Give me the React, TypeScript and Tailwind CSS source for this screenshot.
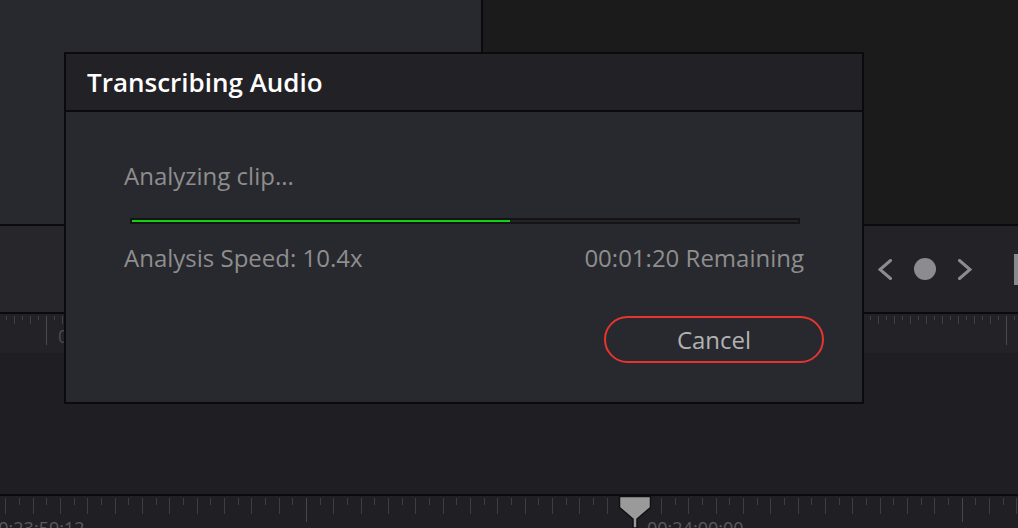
import React from 'react';

const topTicks = Array.from({ length: 130 }, (_, n) => {
    const i = n - 6;
    const x = Math.round(46 + i * 8);
    const kind = i % 120 === 0 ? 'major' : Math.abs(i % 2) === 0 ? 'long' : 'short';
    return { x, kind };
});

const bottomTicks = Array.from({ length: 76 }, (_, n) => {
    const i = n - 22;
    const x = Math.round(306 + i * 13.66);
    const kind = i % 24 === 0 ? 'major' : Math.abs(i % 2) === 0 ? 'long' : 'short';
    return { x, kind };
});

const TopRuler: React.FC = () => (
    <svg width="1018" height="39" className="absolute inset-0" shapeRendering="crispEdges">
        {topTicks.map((t, idx) => (
            <rect
                key={idx}
                x={t.x}
                y={2}
                width={1}
                height={t.kind === 'major' ? 29 : t.kind === 'long' ? 8 : 4}
                fill={t.kind === 'major' ? '#4a4a4f' : '#404045'}
            />
        ))}
    </svg>
);

const BottomRuler: React.FC = () => (
    <svg width="1018" height="32" className="absolute inset-0" shapeRendering="crispEdges">
        {bottomTicks.map((t, idx) => (
            <rect
                key={idx}
                x={t.x}
                y={2}
                width={1}
                height={t.kind === 'major' ? 24 : t.kind === 'long' ? 16 : 7}
                fill={t.kind === 'major' ? '#47474c' : '#3d3d42'}
            />
        ))}
    </svg>
);

const Playhead: React.FC = () => (
    <svg width="34" height="32" viewBox="0 0 34 32" className="absolute left-[618px] top-0">
        <path
            d="M1.5 0.5 H32.5 V11.5 L19 23 V32 H15 V23 L1.5 11.5 Z"
            fill="#9a9a9a"
            stroke="#111113"
            strokeWidth="1.5"
            strokeLinejoin="round"
        />
    </svg>
);

const Chevron: React.FC<{ dir: 'left' | 'right' }> = ({ dir }) => (
    <svg width="14" height="21" viewBox="0 0 14 21">
        <path
            d={dir === 'left' ? 'M12.5 1.5 L2 10.5 L12.5 19.5' : 'M1.5 1.5 L12 10.5 L1.5 19.5'}
            fill="none"
            stroke="#8c8c8e"
            strokeWidth="3"
            strokeLinecap="round"
        />
    </svg>
);

const App: React.FC = () => {
    const progress = 378;

    return (
        <div className="relative w-[1018px] h-[528px] overflow-hidden bg-[#1f1f23] flex flex-col font-['Open_Sans','Noto_Sans',sans-serif]">
            {/* viewers */}
            <div className="flex h-[224px]">
                <div className="w-[481px] bg-[#28292e]" />
                <div className="w-[2px] bg-[#0b0b0d]" />
                <div className="flex-1 bg-[#1b1b1b]" />
            </div>
            <div className="h-[2px] bg-[#0b0b0d]" />

            {/* transport bar */}
            <div className="flex h-[86px] bg-[#222227]">
                <div className="w-[481px] bg-[#26262b]" />
                <div className="flex-1 flex items-center justify-end gap-[22px]">
                    <Chevron dir="left" />
                    <div className="w-[22px] h-[22px] rounded-full bg-[#8c8c8e]" />
                    <Chevron dir="right" />
                    <div className="ml-[20px] w-[4px] h-[31px] bg-[#8a8a8c]" />
                </div>
            </div>
            <div className="h-[2px] bg-[#0b0b0d]" />

            {/* timeline ruler */}
            <div className="relative h-[39px] bg-[#232327]">
                <TopRuler />
                <div className="relative pl-[58px] pt-[13px] text-[18px] leading-[18px] text-[#4c4c50]">
                    00:00:00:00
                </div>
            </div>
            <div className="flex-1 bg-[#1f1f23]" />
            <div className="h-[2px] bg-[#0b0b0d]" />

            {/* mini timeline */}
            <div className="relative h-[32px] bg-[#202024]">
                <BottomRuler />
                <div className="relative flex pt-[23px] text-[18px] leading-[18px] text-[#5a5a5e] whitespace-nowrap">
                    <span className="-ml-[12px] w-[659px]">00:23:59:12</span>
                    <span>00:24:00:00</span>
                </div>
                <Playhead />
            </div>

            {/* dialog */}
            <div className="absolute left-[64px] top-[52px] w-[800px] h-[352px] border-2 border-[#0b0b0d] bg-[#28292e] flex flex-col">
                <div className="h-[58px] flex items-center px-[21px] bg-[#212126] border-b-2 border-[#0b0b0d]">
                    <h2 className="text-[26px] leading-[36px] font-semibold text-white">Transcribing Audio</h2>
                </div>

                <div className="flex flex-col pl-[58px] pr-[58px] pt-[48px]">
                    <p className="text-[24px] leading-[32px] text-[#8e8e8e]">Analyzing clip...</p>

                    <div className="mt-[26px] ml-[6px] w-[670px] h-[6px] bg-[#141416] p-[2px]">
                        <div className="h-[2px] bg-[#232327]">
                            <div className="h-full bg-[#12d212]" style={{ width: progress }} />
                        </div>
                    </div>

                    <div className="mt-[18px] flex justify-between text-[24px] leading-[32px] text-[#8e8e8e]">
                        <span>Analysis Speed: 10.4x</span>
                        <span>00:01:20 Remaining</span>
                    </div>

                    <button className="mt-[42px] self-end -mr-[20px] w-[220px] h-[47px] rounded-full border-2 border-[#e6352f] text-[24px] leading-[32px] text-[#b2b2b2]">
                        Cancel
                    </button>
                </div>
            </div>
        </div>
    );
};

export default App;
